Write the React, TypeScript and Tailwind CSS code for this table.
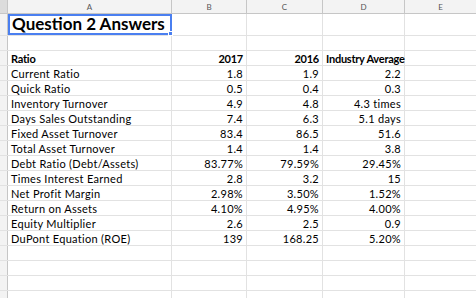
const rows: [string, string, string, string][] = [
  ["Current Ratio", "1.8", "1.9", "2.2"],
  ["Quick Ratio", "0.5", "0.4", "0.3"],
  ["Inventory Turnover", "4.9", "4.8", "4.3 times"],
  ["Days Sales Outstanding", "7.4", "6.3", "5.1 days"],
  ["Fixed Asset Turnover", "83.4", "86.5", "51.6"],
  ["Total Asset Turnover", "1.4", "1.4", "3.8"],
  ["Debt Ratio (Debt/Assets)", "83.77%", "79.59%", "29.45%"],
  ["Times Interest Earned", "2.8", "3.2", "15"],
  ["Net Profit Margin", "2.98%", "3.50%", "1.52%"],
  ["Return on Assets", "4.10%", "4.95%", "4.00%"],
  ["Equity Multiplier", "2.6", "2.5", "0.9"],
  ["DuPont Equation (ROE)", "139", "168.25", "5.20%"],
];

const cell = "h-full border-r border-[#e2e2e2] flex items-end pb-[1px] px-[3px] whitespace-nowrap";

function Row({
  a = "",
  b = "",
  c = "",
  d = "",
  bold = false,
}: {
  a?: string;
  b?: string;
  c?: string;
  d?: string;
  bold?: boolean;
}) {
  return (
    <div
      className={`flex h-[15px] border-b border-[#e2e2e2] ${
        bold ? "font-bold tracking-[-0.25px]" : "tracking-[0.3px]"
      }`}
    >
      <div className="w-[8px] h-full bg-[#f3f3f3] border-r border-[#c6c6c6]" />
      <div className={`${cell} w-[164px] overflow-hidden`}>{a}</div>
      <div className={`${cell} w-[75px] justify-end overflow-hidden`}>{b}</div>
      <div className={`${cell} w-[76px] justify-end overflow-hidden`}>{c}</div>
      <div className={`${cell} w-[82px] ${bold ? "justify-start" : "justify-end overflow-hidden"}`}>{d}</div>
      <div className="flex-1 h-full" />
    </div>
  );
}

export default function App() {
  return (
    <div
      className="w-[476px] h-[298px] overflow-hidden bg-white text-black text-[11px] leading-none"
      style={{ fontFamily: "Lato, 'Open Sans', sans-serif" }}
    >
      {/* column headers */}
      <div className="flex h-[14px] bg-[#f3f3f3] border-b border-[#c6c6c6] text-[8px] text-[#555]">
        <div className="w-[8px] h-full bg-[#dcdcdc] border-r border-[#c6c6c6]" />
        <div className="w-[164px] h-full border-r border-[#c6c6c6] flex items-center justify-center">A</div>
        <div className="w-[75px] h-full border-r border-[#c6c6c6] flex items-center justify-center">B</div>
        <div className="w-[76px] h-full border-r border-[#c6c6c6] flex items-center justify-center">C</div>
        <div className="w-[82px] h-full border-r border-[#c6c6c6] flex items-center justify-center">D</div>
        <div className="flex-1 h-full flex items-center justify-center">E</div>
      </div>

      {/* title row */}
      <div className="flex h-[22px] border-b border-[#e2e2e2]">
        <div className="w-[8px] h-full bg-[#f3f3f3] border-r border-[#c6c6c6]" />
        <div className="relative w-[164px] h-full border-2 border-[#4a7ff0] flex items-end px-[2px] pb-[1px] text-[17px] font-bold whitespace-nowrap">
          Question 2 Answers
          <span className="absolute -right-[3px] -bottom-[3px] w-[5px] h-[5px] bg-[#4a7ff0] border border-white" />
        </div>
        <div className="w-[75px] h-full border-r border-[#e2e2e2]" />
        <div className="w-[76px] h-full border-r border-[#e2e2e2]" />
        <div className="w-[82px] h-full border-r border-[#e2e2e2]" />
        <div className="flex-1" />
      </div>

      <Row />
      <Row a="Ratio" b="2017" c="2016" d="Industry Average" bold />
      {rows.map(([a, b, c, d]) => (
        <Row key={a} a={a} b={b} c={c} d={d} />
      ))}
      <Row />
      <Row />
      <Row />
      <Row />
    </div>
  );
}
